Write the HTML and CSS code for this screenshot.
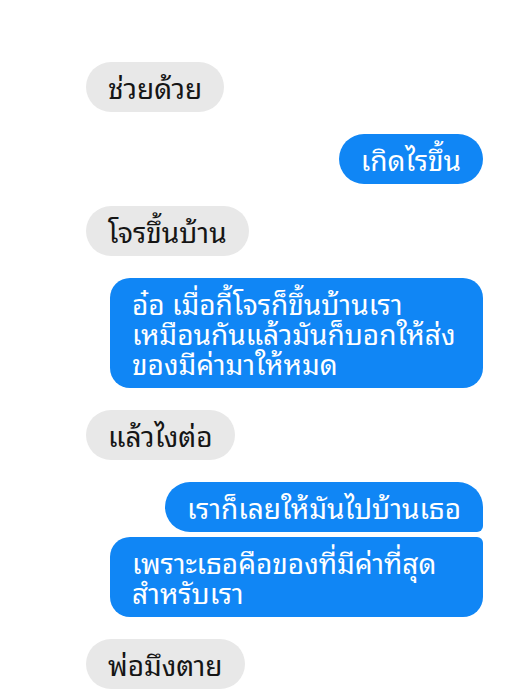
FILE: index.html
```html
<!DOCTYPE html>
<html lang="th">
<head>
<meta charset="utf-8">
<link rel="stylesheet" href="styles.css">
</head>
<body>
<div class="chat">
  <div class="row in"><div class="bubble gray">ช่วยด้วย</div></div>
  <div class="row out"><div class="bubble blue">เกิดไรขึ้น</div></div>
  <div class="row in"><div class="bubble gray">โจรขึ้นบ้าน</div></div>
  <div class="row out"><div class="bubble blue wide">อ๋อ เมื่อกี้โจรก็ขึ้นบ้านเรา<br>เหมือนกันแล้วมันก็บอกให้ส่ง<br>ของมีค่ามาให้หมด</div></div>
  <div class="row in"><div class="bubble gray">แล้วไงต่อ</div></div>
  <div class="row out"><div class="bubble blue first">เราก็เลยให้มันไปบ้านเธอ</div></div>
  <div class="row out grouped"><div class="bubble blue wide last">เพราะเธอคือของที่มีค่าที่สุด<br>สำหรับเรา</div></div>
  <div class="row in"><div class="bubble gray">พ่อมึงตาย</div></div>
</div>
</body>
</html>
```
FILE: styles.css
```css
html, body {
  margin: 0;
  padding: 0;
  background: #ffffff;
}
.chat {
  display: flex;
  flex-direction: column;
  padding: 62px 43px 0 86px;
  font-family: "Noto Sans Thai Looped", "Garuda", "Loma", "Noto Sans Thai", "Noto Sans", sans-serif;
  font-size: 28px;
  line-height: 30px;
}
.row {
  display: flex;
  margin-top: 22px;
}
.row:first-child {
  margin-top: 0;
}
.row.grouped {
  margin-top: 5px;
}
.row.in {
  justify-content: flex-start;
}
.row.out {
  justify-content: flex-end;
}
.bubble {
  padding: 10px 22px;
  border-radius: 25px;
  white-space: nowrap;
}
.gray {
  background: #e8e8e8;
  color: #151515;
}
.blue {
  background: #1086f5;
  color: #ffffff;
}
.wide {
  width: 373px;
  box-sizing: border-box;
  border-radius: 20px;
}
.first {
  border-bottom-right-radius: 6px;
}
.last {
  border-top-right-radius: 6px;
}
```
